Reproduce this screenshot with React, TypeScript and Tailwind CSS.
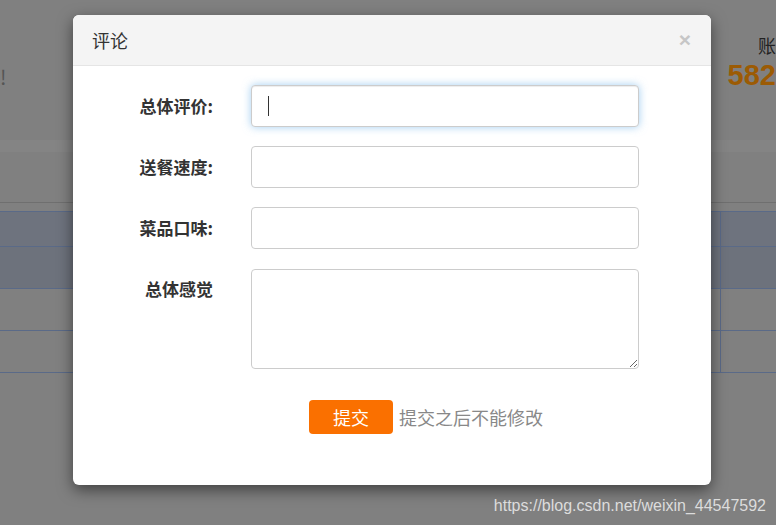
import React from "react";

const cjk = "font-['Microsoft_YaHei','Noto_Sans_CJK_SC',sans-serif]";

// Backdrop page (already dimmed by the modal overlay)
const BackPage: React.FC = () => (
  <div className="flex flex-col h-full bg-[#808080]">
    <div className="h-[140px] flex justify-between">
      <span className={`${cjk} text-[20px] text-[#555] pt-[62px]`}>!</span>
      <div className="flex flex-col items-end pt-[32px]">
        <span className={`${cjk} text-[18px] text-[#222] leading-[26px] whitespace-nowrap`}>账</span>
        <span className="font-['Liberation_Sans',sans-serif] font-bold text-[29px] leading-[34px] text-[#9c5b04] whitespace-nowrap">
          582
        </span>
      </div>
    </div>
    <div className="h-[12px] bg-[#848484]" />
    <div className="h-[51px] border-b border-[#6f6f6f]" />
    <div className="h-[8px]" />
    {/* table */}
    <div className="border-t border-[#5a6a88]">
      {[
        { h: "h-[35px]", bg: "bg-[#6e737e]" },
        { h: "h-[42px]", bg: "bg-[#6d727c]" },
        { h: "h-[42px]", bg: "bg-[#808080]" },
        { h: "h-[42px]", bg: "bg-[#808080]" },
      ].map((r, i) => (
        <div key={i} className={`flex ${r.h} ${r.bg} border-b border-[#5a6a88]`}>
          <div className="w-[721px] border-r border-[#5a6a88]" />
          <div className="flex-1" />
        </div>
      ))}
    </div>
  </div>
);

const labelCls = `${cjk} w-[140px] text-right font-bold text-[17px] text-[#333]`;
const inputCls =
  "w-[388px] h-[42px] rounded-[4px] border border-[#ccc] bg-white px-3 outline-none";

const App: React.FC = () => {
  return (
    <div className="relative w-[776px] h-[525px] overflow-hidden">
      <BackPage />

      {/* modal */}
      <div className="absolute left-[73px] top-[15px] w-[638px] h-[470px] bg-white rounded-[6px] shadow-[0_5px_15px_rgba(0,0,0,0.5)] overflow-hidden flex flex-col">
        <div className="h-[51px] bg-[#f4f4f4] border-b border-[#e5e5e5] flex items-center justify-between pl-[19px] pr-[20px]">
          <span className={`${cjk} text-[18px] text-[#333]`}>评论</span>
          <span className="font-['Liberation_Sans',sans-serif] font-bold text-[21px] text-[#c6c6c6] leading-none -mt-[2px]">
            ×
          </span>
        </div>

        <div className="flex flex-col pt-[19px] gap-[19px]">
          <div className="flex items-center gap-[38px]">
            <label className={labelCls}>总体评价:</label>
            <div className="relative">
              <input
                className={`${inputCls} border-[#66afe9] shadow-[inset_0_1px_1px_rgba(0,0,0,0.075),0_0_8px_rgba(102,175,233,0.6)]`}
              />
              <span className="absolute left-[17px] top-[11px] w-px h-[20px] bg-[#333]" />
            </div>
          </div>
          <div className="flex items-center gap-[38px]">
            <label className={labelCls}>送餐速度:</label>
            <input className={inputCls} />
          </div>
          <div className="flex items-center gap-[38px]">
            <label className={labelCls}>菜品口味:</label>
            <input className={inputCls} />
          </div>
          <div className="flex items-start gap-[38px] mt-[1px]">
            <label className={`${labelCls} pt-[7px]`}>总体感觉</label>
            <textarea className="w-[388px] h-[100px] rounded-[4px] border border-[#ccc] bg-white px-3 py-2 outline-none" />
          </div>
        </div>

        <div className="flex items-center pl-[236px] pt-[31px] gap-[6px]">
          <button
            className={`${cjk} w-[84px] h-[34px] rounded-[4px] bg-[#fa7000] text-white text-[18px]`}
          >
            提交
          </button>
          <span className={`${cjk} text-[18px] text-[#888]`}>提交之后不能修改</span>
        </div>
      </div>

      {/* watermark */}
      <span className="absolute right-[10px] top-[494px] font-['Liberation_Sans',sans-serif] text-[16px] text-[#dcdcdc]">
        https://blog.csdn.net/weixin_44547592
      </span>
    </div>
  );
};

export default App;
